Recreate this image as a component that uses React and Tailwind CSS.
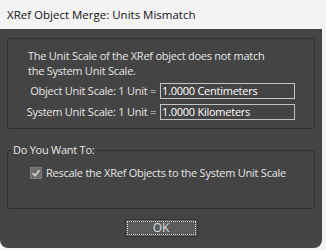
export default function App() {
  const font = { fontFamily: '"Open Sans", "Noto Sans", sans-serif' };
  return (
    <div className="w-[326px] h-[250px] bg-[#f3f3f3]" style={font}>
      <div className="w-[322px] h-[248px] bg-[#444444] rounded-br-[8px] rounded-bl-[8px] flex flex-col overflow-hidden">
        <div className="h-[29px] shrink-0 bg-[#f3f3f3] text-[#111] text-[11.5px] leading-[29px] pl-[7px]">
          XRef Object Merge: Units Mismatch
        </div>
        <div className="flex flex-col px-[7px] pt-[9px] text-[11px] tracking-[-0.25px] text-[#e6e6e6]">
          <div className="h-[91px] border border-[#2f2f2f] rounded-[3px] pl-[20px] pt-[9px] flex flex-col">
            <div className="leading-[15px] whitespace-nowrap">
              The Unit Scale of the XRef object does not match
              <br />
              the System Unit Scale.
            </div>
            <div className="flex flex-col gap-[5px] mt-[5px] -ml-[20px]">
              <div className="flex items-center h-[16px]">
                <span className="w-[152px] text-right pr-[4px] leading-[16px] whitespace-nowrap">Object Unit Scale: 1 Unit =</span>
                <div className="w-[135px] h-[16px] border border-[#c4c4c4] text-white leading-[14px] pl-[1px] whitespace-nowrap">1.0000 Centimeters</div>
              </div>
              <div className="flex items-center h-[16px]">
                <span className="w-[152px] text-right pr-[4px] leading-[16px] whitespace-nowrap">System Unit Scale: 1 Unit =</span>
                <div className="w-[135px] h-[16px] border border-[#c4c4c4] text-white leading-[14px] pl-[1px] whitespace-nowrap">1.0000 Kilometers</div>
              </div>
            </div>
          </div>
          <fieldset className="mt-[14px] h-[66px] border border-[#2f2f2f] rounded-[3px] m-0 p-0 min-w-0">
            <legend className="ml-[3px] px-[2px] leading-[14px]">Do You Want To:</legend>
            <div className="flex items-center pl-[22px] pt-[9px] whitespace-nowrap overflow-hidden w-[279px]">
              <div className="w-[12px] h-[12px] bg-[#6c6c6c] border border-[#7c7c7c] flex items-center justify-center shrink-0">
                <svg width="10" height="10" viewBox="0 0 10 10">
                  <path d="M1.5 5.2 L4 7.6 L8.6 2.2" fill="none" stroke="#c8c8c8" strokeWidth="1.8" />
                </svg>
              </div>
              <span className="ml-[4px] leading-[14px]">Rescale the XRef Objects to the System Unit Scale</span>
            </div>
          </fieldset>
          <div className="flex justify-center mt-[10px]">
            <div className="w-[73px] h-[18px] bg-[#5c5c5c] border border-[#343434] rounded-[2px] p-[1px]">
              <div className="w-full h-full border border-dotted border-[#d8d8d8] flex items-center justify-center text-[#dcdcdc] text-[12px] tracking-normal leading-none">
                OK
              </div>
            </div>
          </div>
        </div>
      </div>
    </div>
  );
}
